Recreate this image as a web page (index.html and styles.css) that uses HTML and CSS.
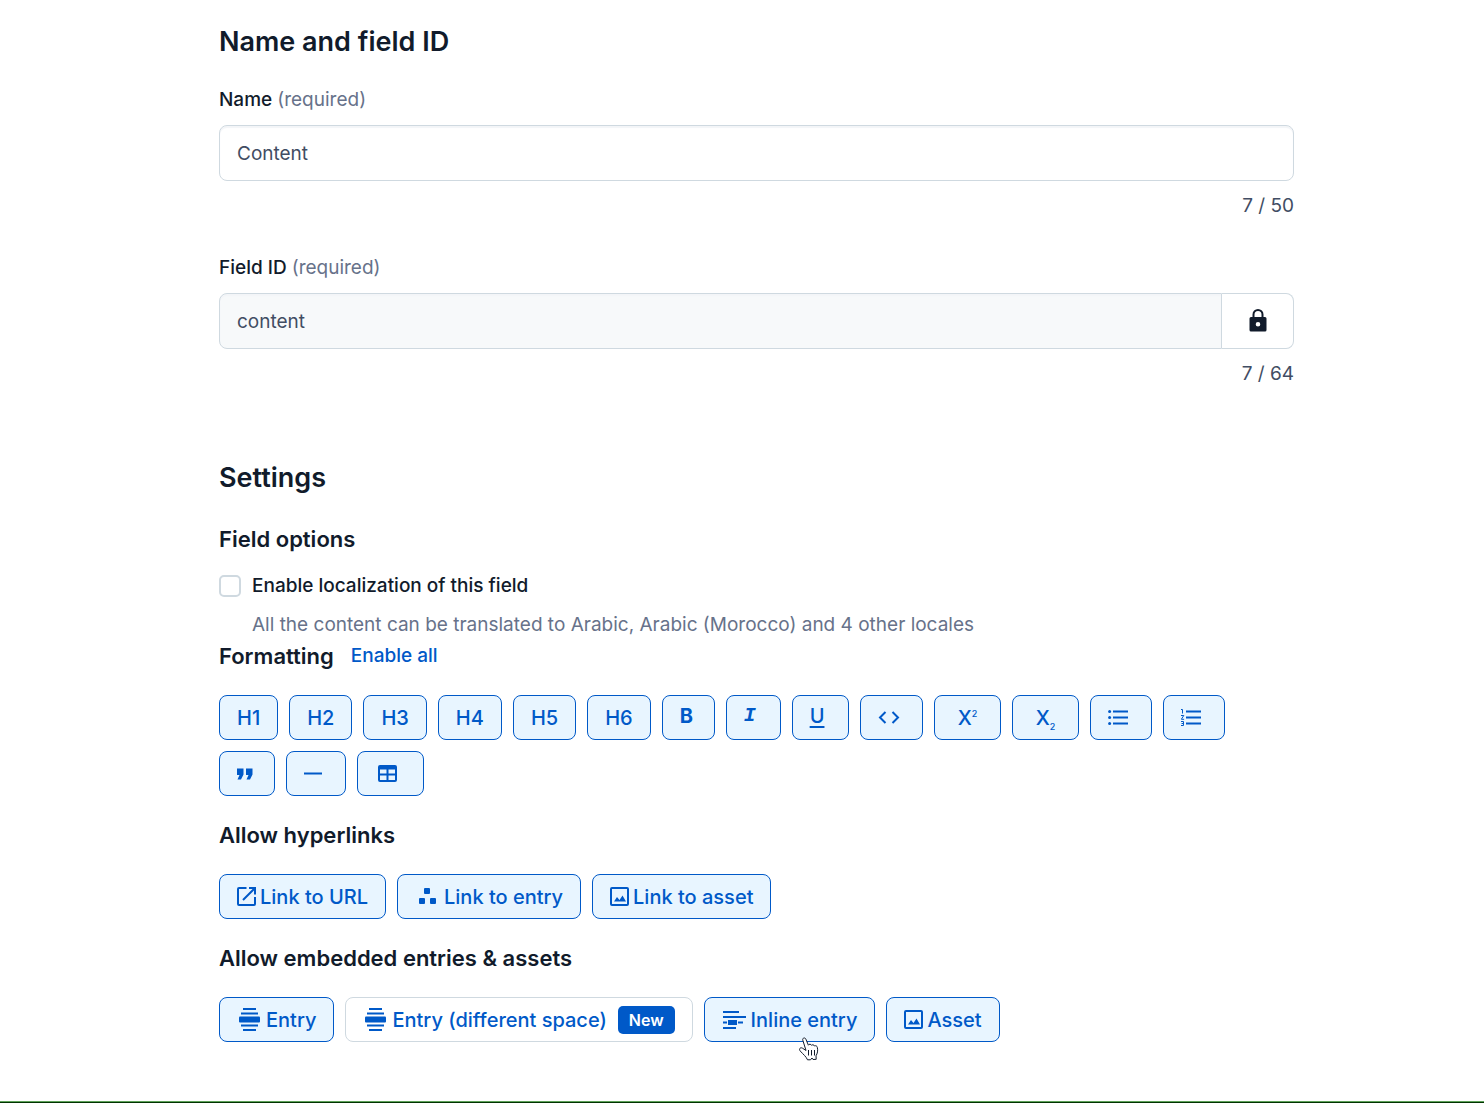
FILE: index.html
```html
<!DOCTYPE html>
<html lang="en">
  <head>
    <meta charset="UTF-8" />
    <meta name="viewport" content="width=device-width, initial-scale=1.0" />
    <title>Content field</title>
    <link rel="stylesheet" href="styles.css">
  </head>

  <body>
    <main class="page">
      <!-- Name and field ID -->
      <h2 class="section-title">Name and field ID</h2>
      <div class="field">
        <label class="label" for="name">Name <span class="muted">(required)</span></label>
        <input class="input" id="name" type="text" value="Content" maxlength="50" />
        <p class="count">7 / 50</p>
      </div>
      <div class="field">
        <label class="label" for="field-id">Field ID <span class="muted">(required)</span></label>
        <div class="input-group">
          <input class="input" id="field-id" type="text" value="content" readonly />
          <button class="lock" type="button" aria-label="Unlock field ID">
            <svg width="18" height="24" viewBox="0 0 18 24">
              <path d="M4.5 9V5.500a4.500 4.500 0 0 1 9 0v3.500" fill="none" stroke="#111b2b" stroke-width="2" />
              <path fill="#111b2b" fill-rule="evenodd" d="M2 8h14a1.500 1.500 0 0 1 1.500 1.500v11.500a1.500 1.500 0 0 1-1.500 1.500h-14a1.500 1.500 0 0 1-1.500-1.500v-11.500a1.500 1.500 0 0 1 1.500-1.500zM9 13a2.300 2.300 0 1 0 0 4.600a2.300 2.300 0 0 0 0-4.600z" />
            </svg>
          </button>
        </div>
        <p class="count">7 / 64</p>
      </div>

      <!-- Settings -->
      <h2 class="section-title settings-title">Settings</h2>
      <h3 class="group-title">Field options</h3>
      <div class="option">
        <input class="checkbox" id="localize" type="checkbox" />
        <label class="option-label" for="localize">Enable localization of this field</label>
      </div>
      <p class="help">All the content can be translated to Arabic, Arabic (Morocco) and 4 other locales</p>

      <div class="group-head">
        <h3 class="group-title">Formatting</h3>
        <a class="enable-all" href="#">Enable all</a>
      </div>
      <div class="buttons formatting">
        <button class="btn" type="button">H1</button>
        <button class="btn" type="button">H2</button>
        <button class="btn" type="button">H3</button>
        <button class="btn" type="button">H4</button>
        <button class="btn" type="button">H5</button>
        <button class="btn" type="button">H6</button>
        <button class="btn bold" type="button"><b>B</b></button>
        <button class="btn italic" type="button"><i>I</i></button>
        <button class="btn underline" type="button"><span>U</span></button>
        <button class="btn" type="button" aria-label="Code">
          <svg width="27" height="24" viewBox="0 0 27 24"><path class="line" d="M7.500 6 2 11.500l5.500 5.500M14.500 6l5.500 5.500-5.500 5.500" /></svg>
        </button>
        <button class="btn script" type="button"><span>X<sup>2</sup></span></button>
        <button class="btn script" type="button"><span>X<sub>2</sub></span></button>
        <button class="btn" type="button" aria-label="Unordered list">
          <svg width="26" height="24" viewBox="0 0 26 24">
            <path class="line" d="M5 5.500h15M5 11.500h15M5 17.500h15" />
            <circle cx="1.600" cy="5.500" r="1.500" /><circle cx="1.600" cy="11.500" r="1.500" /><circle cx="1.600" cy="17.500" r="1.500" />
          </svg>
        </button>
        <button class="btn" type="button" aria-label="Ordered list">
          <svg width="26" height="24" viewBox="0 0 26 24">
            <path class="line" d="M5 5.500h15M5 11.500h15M5 17.500h15" />
            <path class="thin" d="M0 3.500h1.500v4M0 9.500h2.800l-2.500 3.800h2.800M0 15.500h2.500v4h-2.500M.5 17.500h2" />
          </svg>
        </button>
        <button class="btn" type="button" aria-label="Quote">
          <svg width="20" height="24" viewBox="0 0 20 24"><path d="M0 6.500h6.500v6l-2.500 5h-3.500l2-4.500h-2.500zM9 6.500h6.500v6l-2.500 5h-3.500l2-4.500h-2.500z" /></svg>
        </button>
        <button class="btn" type="button" aria-label="Horizontal rule">
          <svg width="24" height="24" viewBox="0 0 24 24"><path class="line" d="M0 11.500h18" /></svg>
        </button>
        <button class="btn" type="button" aria-label="Table">
          <svg width="31" height="24" viewBox="0 0 31 24">
            <path fill-rule="evenodd" d="M5 3h15a2 2 0 0 1 2 2v13a2 2 0 0 1-2 2h-15a2 2 0 0 1-2-2v-13a2 2 0 0 1 2-2zM5 7.500v4h6.500v-4zM13.500 7.500v4h6.500v-4zM5 13.500v4.500h6.500v-4.500zM13.500 13.500v4.500h6.500v-4.500z" />
          </svg>
        </button>
      </div>

      <h3 class="group-title">Allow hyperlinks</h3>
      <div class="buttons">
        <button class="btn" type="button">
          <svg width="23" height="24" viewBox="0 0 23 24"><path class="line" d="M9.500 3H2a1 1 0 0 0-1 1v15a1 1 0 0 0 1 1h15a1 1 0 0 0 1-1V12M12 3h6v6.500M18 3 6 15" /></svg>
          Link to URL
        </button>
        <button class="btn" type="button">
          <svg width="29" height="24" viewBox="0 0 29 24">
            <rect x="9" y="3" width="6" height="6" rx="1" /><rect x="4" y="13" width="6" height="6" rx="1" /><rect x="15" y="13" width="6" height="6" rx="1" />
          </svg>
          Link to entry
        </button>
        <button class="btn" type="button">
          <svg width="23" height="24" viewBox="0 0 23 24">
            <rect class="line" x="1" y="3" width="17" height="17" rx="1" /><path d="M4 16.500 7 12l2.500 3 3-4.500 3.500 6z" />
          </svg>
          Link to asset
        </button>
      </div>

      <h3 class="group-title">Allow embedded entries &amp; assets</h3>
      <div class="buttons">
        <button class="btn" type="button">
          <svg width="29" height="24" viewBox="0 0 29 24">
            <path class="line" d="M6 1h13M4 5.500h17M4 17.500h17M6 22h13" /><rect x="2" y="8.500" width="21" height="6" rx="1" />
          </svg>
          Entry
        </button>
        <button class="btn off" type="button">
          <svg width="29" height="24" viewBox="0 0 29 24">
            <path class="line" d="M6 1h13M4 5.500h17M4 17.500h17M6 22h13" /><rect x="2" y="8.500" width="21" height="6" rx="1" />
          </svg>
          Entry (different space)
          <span class="badge">New</span>
        </button>
        <button class="btn" type="button">
          <svg width="29" height="24" viewBox="0 0 29 24">
            <path class="line" d="M1 4h16M1 9h23M1 14.500h4M16 14.500h5M1 20h13" /><rect x="6" y="12" width="9" height="5" />
          </svg>
          Inline entry
          <svg class="cursor" width="24" height="26" viewBox="0 0 24 26">
            <path d="M9 14.500 5.800 4.200c-.7-2.200 2.200-3.200 3.100-1l2.500 6c.5-1.300 2.600-1.300 3.100.1.800-.9 2.500-.6 3 .7 1.200-.7 2.600 0 2.800 1.300.8 3.400.2 6-1.300 8.500l.2 3.500-3.200.2-1-1.500-1.500 1.800H10.500c-1.300-3.200-4-5.200-7.200-8.700-1.900-2.200.2-4.200 2.200-2.900z" />
            <path d="M11.500 14v5.500M14.500 14v5.500M17.500 14v5.500" />
          </svg>
        </button>
        <button class="btn" type="button">
          <svg width="23" height="24" viewBox="0 0 23 24">
            <rect class="line" x="1" y="3" width="17" height="17" rx="1" /><path d="M4 16.500 7 12l2.500 3 3-4.500 3.500 6z" />
          </svg>
          Asset
        </button>
      </div>
    </main>
  </body>
</html>
```
FILE: styles.css
```css
* {
  box-sizing: border-box;
}

body {
  display: flex;
  min-height: 100vh;
  margin: 0;
  border-bottom: 1px solid #003300;
  background: #fff;
  color: #111b2b;
  font-family: Inter, "Liberation Sans", sans-serif;
  font-size: 19px;
  line-height: 28px;
}

h2,
h3,
p {
  margin: 0;
}

.page {
  flex: 1;
  padding: 25px 190px 32px 219px;
  border-bottom: 1px solid #5fa35a;
}

.section-title {
  margin-bottom: 27px;
  font-size: 27px;
  font-weight: 600;
  line-height: 34px;
}

.settings-title {
  margin-top: 73px;
}

.field + .field {
  margin-top: 34px;
}

.label {
  display: block;
  margin-bottom: 11px;
  font-weight: 500;
}

.muted {
  color: #67728a;
  font-weight: 400;
}

.input {
  display: block;
  width: 100%;
  height: 56px;
  padding: 0 17px;
  border: 1px solid #cfd9e0;
  border-radius: 8px;
  box-shadow: inset 0 2px 1px #f3f5f8;
  color: #414d63;
  font: inherit;
}

.input-group {
  display: flex;
}

.input-group .input {
  flex: 1;
  border-radius: 8px 0 0 8px;
  background: #f7f9fa;
}

.lock {
  display: flex;
  align-items: center;
  justify-content: center;
  width: 72px;
  border: 1px solid #cfd9e0;
  border-left: 0;
  border-radius: 0 8px 8px 0;
  background: #fff;
}

.count {
  margin-top: 11px;
  color: #414d63;
  text-align: right;
}

.group-title {
  font-size: 22px;
  font-weight: 600;
  line-height: 34px;
}

.option {
  display: flex;
  align-items: center;
  gap: 11px;
  margin-top: 16px;
}

.checkbox {
  appearance: none;
  width: 22px;
  height: 22px;
  margin: 0;
  border: 2px solid #cfd9e0;
  border-radius: 5px;
  background: #fff;
}

.option-label {
  font-weight: 500;
}

.help {
  margin-top: 11px;
  padding-left: 33px;
  color: #67728a;
}

.group-head {
  display: flex;
  align-items: center;
  gap: 17px;
}

.enable-all {
  color: #0059c8;
  font-weight: 500;
  text-decoration: none;
}

.buttons {
  display: flex;
  flex-wrap: wrap;
  gap: 11px;
  margin: 22px 0;
}

.formatting {
  padding-right: 32px;
}

.btn {
  position: relative;
  display: flex;
  align-items: center;
  height: 45px;
  padding: 0 17px;
  border: 1px solid #0059c8;
  border-radius: 8px;
  background: #e8f5ff;
  color: #0059c8;
  font: inherit;
  font-size: 20px;
  font-weight: 500;
  cursor: pointer;
}

.off {
  border-color: #cfd9e0;
  background: #fff;
}

.btn svg {
  fill: #0059c8;
}

.btn .line,
.btn .thin {
  fill: none;
  stroke: #0059c8;
  stroke-width: 2;
}

.btn .thin {
  stroke-width: 1;
}

/* letter buttons */
.bold,
.italic,
.underline {
  padding-bottom: 3px;
}

.bold b {
  width: 17px;
  font-weight: 700;
  text-align: left;
}

.italic i {
  width: 19px;
  font-family: "Liberation Mono", monospace;
  font-weight: 700;
  text-align: left;
}

.underline span {
  width: 21px;
  text-align: left;
  text-decoration: underline;
  text-decoration-thickness: 2px;
  text-underline-offset: 3px;
}

.script span {
  width: 31px;
  padding-left: 6px;
  text-align: left;
}

.script sup,
.script sub {
  font-size: 9px;
  line-height: 0;
}

.badge {
  margin-left: 11px;
  padding: 0 11px;
  border-radius: 5px;
  background: #0059c8;
  color: #fff;
  font-size: 16px;
  font-weight: 600;
}

.btn .cursor {
  position: absolute;
  top: 38px;
  left: 92px;
  z-index: 1;
  fill: #fff;
  stroke: #111b2b;
  stroke-width: 1;
}
```
